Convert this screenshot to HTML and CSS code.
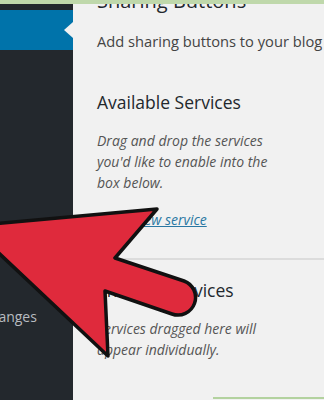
FILE: index.html
```html
<!DOCTYPE html>
<html lang="en">
<head>
<meta charset="utf-8">
<title>Sharing Buttons</title>
<link rel="stylesheet" href="styles.css">
</head>
<body>
<div class="page">
  <nav class="sidebar">
    <ul class="menu">
      <li class="menu-item current"></li>
      <li class="menu-item changes">Changes</li>
    </ul>
  </nav>
  <main class="content">
    <h2 class="page-title">Sharing Buttons</h2>
    <p class="desc">Add sharing buttons to your blog</p>
    <h3 class="section-title">Available Services</h3>
    <p class="hint">Drag and drop the services you'd like to enable into the box below.</p>
    <p class="add-link"><a href="#">Add a new service</a></p>
    <hr class="sep">
    <h3 class="section-title enabled">Enabled Services</h3>
    <p class="hint hint-enabled">Services dragged here will appear individually.</p>
    <div class="enabled-box"></div>
  </main>
</div>
<div class="topstrip"></div>
<svg class="arrow" width="324" height="400" viewBox="0 0 324 400" aria-hidden="true">
  <path d="M -30 226 L 157 209 L 115 258 L 184 281 A 17.5 17.5 0 0 1 172 314 L 105 291 L 108 356 Z" fill="#df2a3c" stroke="#111" stroke-width="3.5" stroke-linejoin="round"/>
</svg>
</body>
</html>
```
FILE: styles.css
```css
* { box-sizing: border-box; }
html, body {
  margin: 0;
  padding: 0;
}
body {
  width: 324px;
  height: 400px;
  overflow: hidden;
  background: #f1f1f1;
  font-family: "Open Sans", "DejaVu Sans", sans-serif;
  position: relative;
}
.page {
  display: flex;
  height: 400px;
}
.sidebar {
  width: 73px;
  flex: none;
  background: #23282d;
  padding-top: 10px;
}
.menu {
  list-style: none;
  margin: 0;
  padding: 0;
}
.menu-item.current {
  height: 40px;
  background: #0073aa;
  position: relative;
}
.menu-item.current::after {
  content: "";
  position: absolute;
  right: 0;
  top: 12px;
  border-style: solid;
  border-width: 8px 9px 8px 0;
  border-color: transparent #f1f1f1 transparent transparent;
}
.menu-item.changes {
  margin-top: 257px;
  margin-left: -19px;
  font-size: 14px;
  line-height: 20px;
  color: #b8bcc0;
  white-space: nowrap;
}
.content {
  flex: 1;
  padding-left: 24px;
  color: #444;
  min-width: 0;
}
.page-title {
  margin: -13px 0 0;
  font-size: 20px;
  line-height: 28px;
  font-weight: 400;
  color: #23282d;
  white-space: nowrap;
}
.desc {
  margin: 16px 0 0;
  font-size: 14.7px;
  line-height: 20px;
  color: #444;
  white-space: nowrap;
}
.section-title {
  margin: 39px 0 0;
  font-size: 17.5px;
  line-height: 24px;
  font-weight: 400;
  color: #23282d;
}
.hint {
  margin: 16px 0 0;
  font-size: 14px;
  line-height: 21px;
  font-style: italic;
  color: #555;
  width: 190px;
}
.add-link {
  margin: 16px 0 0;
  font-size: 14px;
  line-height: 21px;
  font-style: italic;
}
.add-link a {
  color: #2a78a3;
  text-decoration: underline;
}
.sep {
  margin: 28px 0 0 -24px;
  border: 0;
  border-top: 2px solid #dcdcdc;
  height: 0;
}
.section-title.enabled {
  margin-top: 18px;
}
.hint-enabled {
  margin-top: 16px;
}
.enabled-box {
  margin: 37px 0 0 116px;
  height: 20px;
  border-top: 2px solid #b3d29f;
}
.topstrip {
  position: absolute;
  left: 0;
  top: 0;
  width: 324px;
  height: 4px;
  background: #bfd8ab;
}
.arrow {
  position: absolute;
  left: 0;
  top: 0;
  overflow: visible;
}
```
